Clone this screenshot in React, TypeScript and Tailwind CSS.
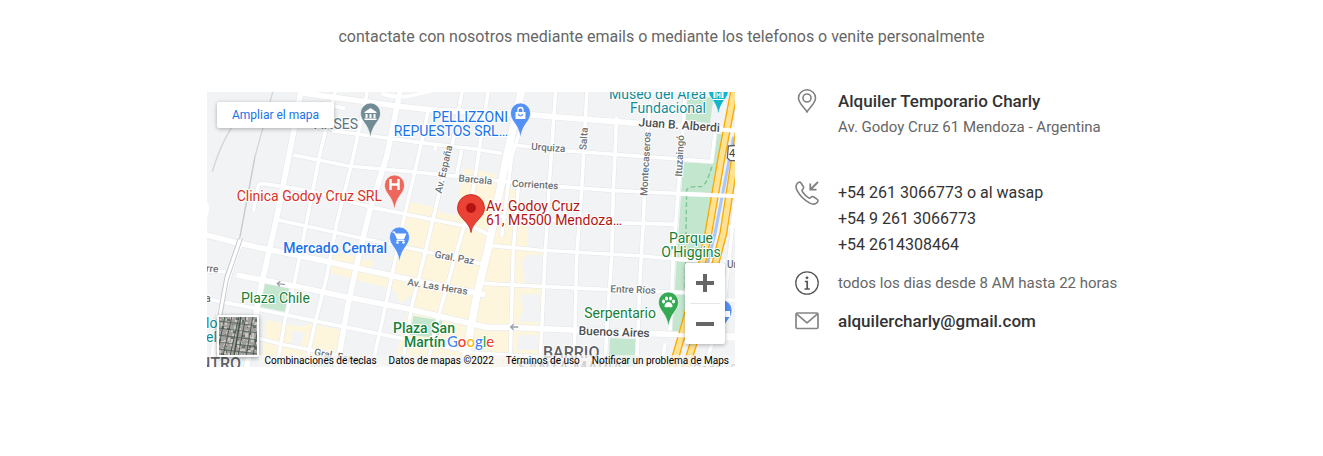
import React from "react";

type Label = {
  text: string;
  x: number;
  y: number;
  className: string;
  rotate?: number;
};

const minorRoads = [
  "M380 122 500 138 640 157 810 177 890 190",
  "M925 165 1090 183 1395 205 1520 215 1530 130",
  "M265 195 430 228 640 247 875 272 1060 290 1230 302 1590 318",
  "M145 365 160 288Q162 281 175 281L300 300 500 352 810 414 848 432",
  "M880 378 1090 394 1410 403",
  "M1570 410H1590",
  "M220 390 450 440 640 480 830 522",
  "M860 467 1000 480 1310 498 1440 510 1560 514",
  "M835 580 1025 590 1200 598 1440 608 1590 632",
  "M6 627 75 640 340 695 590 745 820 790 1000 800",
  "M160 745 240 765 420 800 560 835",
  "M345 40 420 55",
  "M6 543 60 545",
  "M392 0 345 190 300 420 270 570 240 690 215 835",
  "M488 0 440 220 395 400 365 560 330 700 300 835",
  "M670 60 640 200 600 370 560 560 530 700 500 835",
  "M772 0 745 150 700 320 660 490 620 650 590 835",
  "M850 0 800 330 728 580 695 700 665 835",
  "M692 160 690 182",
  "M770 180 755 255",
  "M955 90 920 200 890 440",
  "M1052 0 1035 250 1020 500 1010 720 1005 835",
  "M1146 0 1130 300 1115 500 1110 720 1105 835",
  "M1235 80 1225 300 1220 500 1205 720 1200 835",
  "M1342 0 1325 130 1315 400 1305 560 1295 835",
  "M1442 0 1420 300 1405 500 1395 720",
  "M940 290 925 480 915 835",
  "M1590 340 1560 620 1500 835",
  "M1380 760 1370 835",
];

const mainRoads = [
  "M285 8 575 48 700 62 930 70 1040 80 1300 100 1590 120",
  "M288 0 265 130 220 360 200 450 170 580 140 740 125 835",
  "M586 0 545 200 500 340 465 480 430 640 395 835",
  "M0 434 100 460 370 515 610 568 840 614",
  "M95 555 300 595 420 620 600 655 845 712 925 712 1100 720 1320 730 1470 736 1590 738",
  "M108 450 70 560 40 680 20 835",
];

const nearHighway = "M1588 0 1550 200 1510 430 1490 525 1435 720 1400 840";
const farHighway = "M1612 50 1592 190 1555 430 1530 525 1485 700 1440 840";

const halo = "[paint-order:stroke] stroke-white stroke-2 [stroke-linejoin:round]";
const street = "text-[10px] font-medium fill-[#6b7075] [text-anchor:middle]";
const avenue = "text-[12px] font-medium fill-[#4a4e52] [text-anchor:middle]";
const district = "text-[16px] font-medium fill-[#5f6368]";

const labels: Label[] = [
  { text: "ANSES", x: 151, y: 37, className: "text-[14px] fill-[#5b7480] [text-anchor:end]" },
  { text: "PELLIZZONI", x: 301, y: 30, className: "text-[14px] fill-[#1a73e8] [text-anchor:end]" },
  { text: "REPUESTOS SRL…", x: 301, y: 44, className: "text-[14px] fill-[#1a73e8] [text-anchor:end]" },
  { text: "Museo del Área", x: 499, y: 7, className: "text-[14px] fill-[#0f8c99] [text-anchor:end]" },
  { text: "Fundacional", x: 499, y: 21, className: "text-[14px] fill-[#0f8c99] [text-anchor:end]" },
  { text: "Clinica Godoy Cruz SRL", x: 175, y: 109, className: "text-[14px] fill-[#d93025] [text-anchor:end]" },
  { text: "Av. Godoy Cruz", x: 279, y: 119, className: "text-[14px] fill-[#b31412]" },
  { text: "61, M5500 Mendoza…", x: 279, y: 133, className: "text-[14px] fill-[#b31412]" },
  { text: "Mercado Central", x: 180, y: 161, className: "text-[14px] font-medium fill-[#1a73e8] [text-anchor:end]" },
  { text: "Plaza Chile", x: 34, y: 211, className: "text-[14px] fill-[#188038]" },
  { text: "Plaza San", x: 186, y: 241, className: "text-[14px] font-medium fill-[#188038]" },
  { text: "Martín", x: 197, y: 255, className: "text-[14px] font-medium fill-[#188038]" },
  { text: "Parque", x: 484, y: 151, className: "text-[14px] fill-[#188038] [text-anchor:middle]" },
  { text: "O'Higgins", x: 484, y: 165, className: "text-[14px] fill-[#188038] [text-anchor:middle]" },
  { text: "Serpentario", x: 449, y: 226, className: "text-[14px] fill-[#188038] [text-anchor:end]" },
  { text: "Juan B. Alberdi", x: 472, y: 37, rotate: 4, className: avenue },
  { text: "Buenos Aires", x: 407, y: 244, rotate: 2, className: avenue },
  { text: "Urquiza", x: 341, y: 59, rotate: 4, className: street },
  { text: "Barcala", x: 268, y: 91, rotate: 5, className: street },
  { text: "Corrientes", x: 328, y: 96, rotate: 3, className: street },
  { text: "Entre Ríos", x: 426, y: 201, rotate: 2, className: street },
  { text: "Gral. Paz", x: 247, y: 169, rotate: 10, className: street },
  { text: "Av. Las Heras", x: 230, y: 198, rotate: 9, className: street },
  { text: "Gral. Espejo", x: 133, y: 268, rotate: 10, className: street },
  { text: "Av. España", x: 240, y: 78, rotate: -77, className: street },
  { text: "Salta", x: 380, y: 47, rotate: -86, className: street },
  { text: "Montecaseros", x: 442, y: 72, rotate: -87, className: street },
  { text: "Ituzaingó", x: 476, y: 64, rotate: -87, className: street },
  { text: "rre", x: 5, y: 180, rotate: 5, className: street },
  { text: "a", x: 1, y: 210, className: street },
  { text: "Ur", x: 525, y: 176, className: street },
  { text: "lo", x: -1, y: 236, className: "text-[14px] fill-[#0f8c99]" },
  { text: "el", x: -1, y: 250, className: "text-[14px] fill-[#0f8c99]" },
  { text: "BARRIO", x: 336, y: 266, className: district },
  { text: "SANTA MARIA", x: 311, y: 281, className: district },
  { text: "NTRO", x: -8, y: 277, className: district },
  { text: "Godoy C", x: 486, y: 281, className: "text-[12px] fill-[#5f6368]" },
];

const pinPath = "M0 14C-2-1-10-2-10-11a10 10 0 0 1 20 0C10-2 2-1 0 14Z";

function Pin({ x, y, fill, children }: { x: number; y: number; fill: string; children: React.ReactNode }) {
  return (
    <g transform={`translate(${x} ${y})`}>
      <path d={pinPath} fill={fill} stroke="#fff" strokeWidth="1" strokeOpacity="0.6" />
      {children}
    </g>
  );
}

function StreetMap() {
  return (
    <svg
      className="block h-full w-full font-['Roboto',sans-serif]"
      viewBox="0 0 528 275"
      preserveAspectRatio="xMidYMid slice"
      role="img"
      aria-label="Mapa de Av. Godoy Cruz 61, Mendoza"
    >
      <rect width="528" height="275" fill="#f1f3f5" />
      <g transform="translate(-2 -2) scale(0.333333)" fill="none">
        <g fill="#fef6dc">
          <path d="M585 400 605 335 690 352 715 370 755 375 775 235 865 250 900 290 935 300 945 375 965 410 970 480 1012 485 1005 835 560 835 600 690 625 610 585 640 570 600 380 550 375 520 395 485 480 510 575 500Z" />
          <path d="M185 690 290 710 315 700 405 720 385 835 170 820Z" />
        </g>
        <g fill="#f1f3f5">
          <path d="M950 515 965 495H1012V580H960Z" />
          <path d="M945 615 1005 610V695H940L955 660Z" />
          <path d="M940 735H1000V780H935Z" />
          <path d="M260 720 300 730 285 775 255 765Z" />
          <path d="M500 690 590 710 570 835 480 835Z" />
          <path d="M510 500 565 510 550 550 500 535Z" />
        </g>
        <g fill="#c3e6ce">
          <path d="M180 580 252 595 240 665 166 650Z" />
          <path d="M625 678 712 692 700 745 615 735Z" />
          <path d="M1215 745 1292 748V835H1210Z" />
          <path d="M1440 10 1525 25 1515 100 1440 90Z" />
          <path d="M1435 217 1522 222 1530 132 1565 132 1530 330 1495 520 1440 725 1402 725 1415 510Z" />
          <path d="M320 815 390 825 385 840 315 840Z" />
        </g>
        <path d="M1440 615 1445 300Q1450 288 1490 290 1505 285 1522 225" stroke="#7cc494" strokeWidth="4" strokeDasharray="14 8" />
        <g stroke="#d3d6da" strokeWidth="4">
          <path d="M205 0 150 200 105 440 65 560 35 700" />
          <path d="M130 40C80 110 50 150 22 245" />
        </g>
        <g stroke="#e2e5e8" strokeWidth="14" strokeLinejoin="round">
          {minorRoads.map((d) => <path key={d} d={d} />)}
        </g>
        <g stroke="#e4e7ea" strokeWidth="20" strokeLinejoin="round">
          {mainRoads.map((d) => <path key={d} d={d} />)}
          <path d="M950 0 905 200 855 450 815 620 775 835" strokeWidth="26" />
        </g>
        <g stroke="#fff" strokeWidth="11" strokeLinejoin="round">
          {minorRoads.map((d) => <path key={d} d={d} />)}
        </g>
        <g stroke="#fff" strokeWidth="17" strokeLinejoin="round">
          {mainRoads.map((d) => <path key={d} d={d} />)}
          <path d="M950 0 905 200 855 450 815 620 775 835" strokeWidth="23" />
          <path d="M530 10Q580 30 640 12L690 0" strokeWidth="10" />
          <path d="M0 335Q15 350 0 385" strokeWidth="10" />
        </g>
        <g stroke="#c6cacf" strokeWidth="3">
          <path d="M150 200 105 440M113 445 70 570 35 760M100 445 60 560 25 750" />
        </g>
        <path d="M1586 140 1530 430 1505 530" stroke="#a9c7fa" strokeWidth="9" />
        <path d="M1420 770Q1440 750 1500 745H1590" stroke="#fff" strokeWidth="12" />
        <g stroke="#f9ab00" strokeWidth="24">
          <path d={nearHighway} />
          <path d={farHighway} />
        </g>
        <g stroke="#fde293" strokeWidth="16">
          <path d={nearHighway} />
          <path d={farHighway} />
        </g>
        <path d="M1410 735 1540 740M1425 312 1590 318M1425 108 1590 122" stroke="#fff" strokeWidth="12" />
        <path d="M1570 168 1620 164V212H1576L1567 204Z" fill="#fff" stroke="#5f6368" strokeWidth="4" />
        <g stroke="#9aa0a6" strokeWidth="4">
          <path d="M240 584 218 581M226 574 217 581 224 589" />
          <path d="M940 711H918M926 703 917 711 926 719" />
        </g>
      </g>

      {labels.map((label) => (
        <text
          key={label.text}
          transform={`translate(${label.x} ${label.y}) rotate(${label.rotate ?? 0})`}
          className={`${halo} ${label.className}`}
        >
          {label.text}
        </text>
      ))}
      <text x="522" y="65" className="fill-[#3c4043] text-[11px]">4</text>

      <Pin x={163.5} y={32} fill="#728c96">
        <path d="M-6-12 0-16 6-12V-11H-6ZM-5-10H-3V-6H-5ZM-1-10H1V-6H-1ZM3-10H5V-6H3ZM-6-5.500H6V-4H-6Z" fill="#fff" />
      </Pin>
      <Pin x={313.500} y={32} fill="#5491f5">
        <path d="M-5-12H5V-5H-5Z" fill="#fff" />
        <path d="M-2.500-12V-14a2.500 2.500 0 0 1 5 0V-12" fill="none" stroke="#fff" strokeWidth="1.300" />
        <path d="M-2-10a2 2 0 0 0 4 0" fill="none" stroke="#5491f5" strokeWidth="1.200" />
      </Pin>
      <Pin x={511.500} y={9} fill="#12b5cb">
        <path d="M-6-11 0-15 6-11V-10H-6ZM-5-9H-3V-3H-5ZM3-9H5V-3H3ZM-2-9-0-6.500 2-9V-3H1V-6L0-5-1-6V-3H-2ZM-6-2H6V-1H-6Z" fill="#fff" />
      </Pin>
      <Pin x={187.500} y={104} fill="#ee675c">
        <path d="M-4-17V-6M4-17V-6M-4-11.500H4" stroke="#fff" strokeWidth="2.400" />
      </Pin>
      <Pin x={192.500} y={156} fill="#5491f5">
        <path d="M-7-16H-5L-2-9H4L6-14H-4" fill="#fff" stroke="#fff" strokeWidth="1.200" />
        <path d="M-3-7.500H5" stroke="#fff" />
        <circle cx="-2" cy="-5.500" r="1.300" fill="#fff" />
        <circle cx="4" cy="-5.500" r="1.300" fill="#fff" />
      </Pin>
      <Pin x={461.500} y={221} fill="#34a853">
        <ellipse cx="-5" cy="-11.500" rx="1.500" ry="2" fill="#fff" />
        <ellipse cx="-2" cy="-14.500" rx="1.500" ry="2" fill="#fff" />
        <ellipse cx="2" cy="-14.500" rx="1.500" ry="2" fill="#fff" />
        <ellipse cx="5" cy="-11.500" rx="1.500" ry="2" fill="#fff" />
        <path d="M-4-7C-4-9-2-11 0-11S4-9 4-7 2-6 0-6-4-5-4-7Z" fill="#fff" />
      </Pin>
      <Pin x={515} y={229} fill="#5491f5">
        <path d="M2-10H8V-4H2Z" fill="#fff" />
      </Pin>
      <path
        transform="translate(264 116)"
        d="M0 24.500C-1.500 13-13.500 10-13.500 0a13.500 13.500 0 0 1 27 0C13.500 10 1.500 13 0 24.500Z"
        fill="#ea4335"
        stroke="#c5221f"
        strokeWidth="0.800"
      />
      <circle cx="264" cy="116" r="5" fill="#b31412" />

      <text x="240" y="255" className="font-['Lato',sans-serif] text-[15px] font-medium [paint-order:stroke] stroke-white stroke-2">
        <tspan fill="#4285f4">G</tspan>
        <tspan fill="#ea4335">o</tspan>
        <tspan fill="#fbbc04">o</tspan>
        <tspan fill="#4285f4">g</tspan>
        <tspan fill="#34a853">l</tspan>
        <tspan fill="#ea4335">e</tspan>
      </text>
    </svg>
  );
}

function SatelliteThumb() {
  const marks = Array.from({ length: 130 }, (_, i) => ({
    x: (i * 17 + ((i * i) % 5)) % 39,
    y: (i * 23 + ((i * i) % 7)) % 39,
    w: 1 + (i % 3),
    h: 1 + ((i * 5) % 3),
    dark: i % 4 === 0,
  }));
  return (
    <svg className="block h-full w-full" viewBox="0 0 38 38" aria-hidden="true">
      <rect width="38" height="38" fill="#a09f9b" />
      {marks.map((m, i) => (
        <rect key={i} x={m.x} y={m.y} width={m.w} height={m.h} fill={m.dark ? "#65726a" : "#cbc6c2"} />
      ))}
      <g stroke="#46544d" fill="none" strokeWidth="0.900">
        <path d="M6-1 0 28M13-1 4 39M20-1 11 39M27-1 19 39M34-1 27 39M40 5 34 39" />
        <path d="M-1 4 39 9M-1 11 39 16M-1 18 39 23M-1 25 39 30M-1 32 39 37" strokeWidth="0.700" />
        <path d="M22-1 15 39" strokeWidth="1.500" />
      </g>
    </svg>
  );
}

function MapPanel() {
  return (
    <section className="relative h-[275px] min-w-0 overflow-hidden" aria-label="Mapa">
      <StreetMap />
      <a
        href="#mapa"
        className="absolute top-[10px] left-[10px] rounded-xs bg-white px-[15px] py-[5px] text-[12px] leading-4 text-[#1a73e8] shadow-[0_1px_4px_rgba(0,0,0,0.3)]"
      >
        Ampliar el mapa
      </a>
      <button
        type="button"
        aria-label="Mostrar imágenes satelitales"
        className="absolute bottom-[10px] left-[10px] size-[42px] overflow-hidden rounded-xs border-2 border-white shadow-[0_1px_4px_rgba(0,0,0,0.4)]"
      >
        <SatelliteThumb />
      </button>
      <div className="absolute right-[10px] bottom-[23px] flex w-10 flex-col rounded-xs bg-white shadow-[0_1px_4px_rgba(0,0,0,0.3)]">
        <button type="button" aria-label="Acercar" className="grid h-10 place-items-center">
          <svg className="size-[18px]" viewBox="0 0 18 18" aria-hidden="true">
            <path d="M9 0V18M0 9H18" stroke="#666" strokeWidth="4" />
          </svg>
        </button>
        <div className="mx-[5px] h-px bg-[#e6e6e6]" />
        <button type="button" aria-label="Alejar" className="grid h-10 place-items-center">
          <svg className="size-[18px]" viewBox="0 0 18 18" aria-hidden="true">
            <path d="M0 9H18" stroke="#666" strokeWidth="4" />
          </svg>
        </button>
      </div>
      <div className="absolute right-0 bottom-0 flex gap-3 bg-[#f5f5f5]/75 px-[6px] text-[10px] leading-3 whitespace-nowrap text-black">
        <button type="button">Combinaciones de teclas</button>
        <span>Datos de mapas ©2022</span>
        <a href="#terminos">Términos de uso</a>
        <a href="#notificar">Notificar un problema de Maps</a>
      </div>
    </section>
  );
}

function LocationIcon() {
  return (
    <svg className="size-6" viewBox="0 0 24 24" fill="none" stroke="#808080" strokeWidth="1.600" aria-hidden="true">
      <path d="M12 23C10 19 3.500 14.500 3.500 9a8.500 8.200 0 0 1 17 0C20.500 14.500 14 19 12 23Z" />
      <circle cx="12" cy="9" r="4" />
    </svg>
  );
}

function PhoneIcon() {
  return (
    <svg className="size-6" viewBox="0 0 24 24" fill="none" stroke="#808080" strokeWidth="1.600" strokeLinejoin="round" aria-hidden="true">
      <path d="M2.200 2.500C3.300 1 5 .7 6 2L8.300 5.500C9 6.700 8.600 7.600 7.500 8.600 6.600 9.400 7 10.200 7.800 11.300 9.500 13.700 11.200 15.300 13.300 16.700 14.300 17.400 15 17.300 15.700 16.500 16.500 15.500 17.500 15.200 18.700 16L22 18.100C23.300 19 23.300 20 22.300 21.200 20.500 23.400 17.700 23.600 14.800 22.100 9.600 19.400 5 14.900 2.200 9.700.7 6.900.6 4.600 2.200 2.500Z" />
      <path d="M23 1 15.500 8.500M15.300 2.500V8.700H21.500" strokeWidth="1.800" />
    </svg>
  );
}

function InfoIcon() {
  return (
    <svg className="size-6" viewBox="0 0 24 24" fill="none" stroke="#555" strokeWidth="1.300" aria-hidden="true">
      <circle cx="12" cy="12" r="11.200" />
      <circle cx="12" cy="6.800" r="1.400" fill="#555" stroke="none" />
      <path d="M9.800 10.500H12.200V18M9.500 18H14.800" strokeWidth="1.700" />
    </svg>
  );
}

function MailIcon() {
  return (
    <svg className="size-6" viewBox="0 0 24 24" fill="none" stroke="#858585" strokeWidth="1.700" strokeLinejoin="round" aria-hidden="true">
      <rect x="1" y="4" width="22" height="15.500" rx="1.200" />
      <path d="M1.500 4.800 12 13.800 22.500 4.800" />
    </svg>
  );
}

function Row({ icon, children }: { icon: React.ReactNode; children: React.ReactNode }) {
  return (
    <div className="flex items-start gap-[19px]">
      <span className="shrink-0 pt-px">{icon}</span>
      <div className="min-w-0">{children}</div>
    </div>
  );
}

export default function App() {
  return (
    <main className="bg-white px-4 pt-6 pb-20 font-['Roboto',sans-serif] text-[16px] leading-[26px] text-[#666]">
      <p className="text-center">
        contactate con nosotros mediante emails o mediante los telefonos o venite personalmente
      </p>
      <div className="mx-auto mt-[38px] grid max-w-[909px] grid-cols-1 gap-[60px] lg:grid-cols-[minmax(0,528fr)_minmax(0,321fr)] lg:gap-[60px] lg:*:min-w-0">
        <div className="pt-1">
          <MapPanel />
        </div>
        <address className="flex flex-col not-italic">
          <Row icon={<LocationIcon />}>
            <h2 className="text-[17px] font-medium text-[#333]">Alquiler Temporario Charly</h2>
            <p className="text-[15px]">Av. Godoy Cruz 61 Mendoza - Argentina</p>
          </Row>
          <div className="mt-10">
            <Row icon={<PhoneIcon />}>
              <a href="tel:+542613066773" className="block text-[#333]">+54 261 3066773 o al wasap</a>
              <a href="tel:+5492613066773" className="block text-[#333]">+54 9 261 3066773</a>
              <a href="tel:+542614308464" className="block text-[#333]">+54 2614308464</a>
            </Row>
          </div>
          <div className="mt-3">
            <Row icon={<InfoIcon />}>
              <p className="text-[15px] lg:whitespace-nowrap">todos los dias desde 8 AM hasta 22 horas</p>
            </Row>
          </div>
          <div className="mt-3">
            <Row icon={<MailIcon />}>
              <a href="mailto:alquilercharly@gmail.com" className="text-[17px] font-medium text-[#333]">
                alquilercharly@gmail.com
              </a>
            </Row>
          </div>
        </address>
      </div>
    </main>
  );
}
